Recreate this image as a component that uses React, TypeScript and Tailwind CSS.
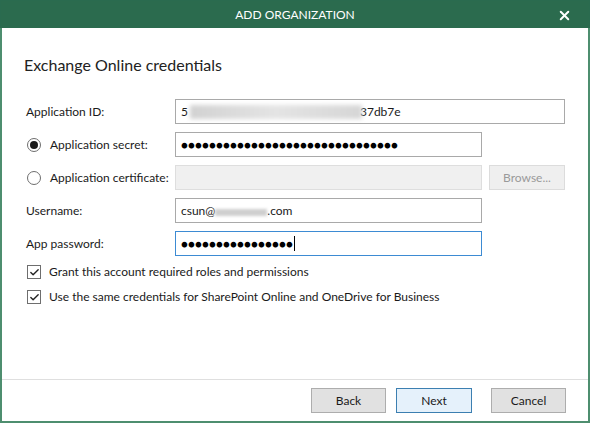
import { Check, X } from 'lucide-react'

const font = { fontFamily: 'Lato, "Noto Sans", sans-serif' }

function Radio({ checked }: { checked?: boolean }) {
  return (
    <span className="flex h-[14px] w-[14px] items-center justify-center rounded-full border border-[#6e6e6e] bg-white">
      {checked && <span className="h-[8px] w-[8px] rounded-full bg-[#1a1a1a]" />}
    </span>
  )
}

function Checkbox() {
  return (
    <span className="flex h-[14px] w-[14px] items-center justify-center border border-[#6e6e6e] bg-white">
      <Check size={11} strokeWidth={3} className="text-[#222]" />
    </span>
  )
}

function Dots({ count }: { count: number }) {
  return <span className="text-[11.5px] tracking-[0.1px] text-black">{'●'.repeat(count)}</span>
}

export default function App() {
  return (
    <div
      className="flex h-[423px] w-[590px] flex-col bg-white text-[12px] text-[#1a1a1a]"
      style={font}
    >
      {/* Title bar */}
      <div className="relative flex h-[28px] shrink-0 items-center justify-center border-x border-t border-[#2a6b4f] bg-[#2b6b4e] text-white">
        <span className="text-[12px]">ADD ORGANIZATION</span>
        <X size={15} strokeWidth={3.2} className="absolute right-[17px] top-[7px] text-white" />
      </div>

      <div className="flex flex-1 flex-col border-x-2 border-b-2 border-[#4e8e6f]">
        <div className="flex-1 pl-[22px] pr-[22px]">
          <h1 className="mt-[25px] text-[16px] text-[#222]">Exchange Online credentials</h1>

          <div className="mt-[22px] flex flex-col gap-[8px]">
            {/* Application ID */}
            <div className="flex h-[25px] items-center">
              <span className="w-[151px] pl-[2px]">Application ID:</span>
              <div className="flex h-full w-[390px] items-center border border-[#a9a9a9] px-[5px]">
                <span>5</span>
                <span className="ml-[2px] h-[14px] w-[172px] bg-gradient-to-r from-[#d2d2d2] via-[#e4e4e4] to-[#d6d6d6] blur-[2px]" />
                <span className="-ml-[2px]">37db7e</span>
              </div>
            </div>

            {/* Application secret */}
            <div className="flex h-[25px] items-center">
              <div className="flex w-[151px] items-center gap-[9px] pl-[3px]">
                <Radio checked />
                <span>Application secret:</span>
              </div>
              <div className="flex h-full w-[307px] items-center border border-[#a9a9a9] px-[5px]">
                <Dots count={31} />
              </div>
            </div>

            {/* Application certificate */}
            <div className="flex h-[25px] items-center">
              <div className="flex w-[151px] items-center gap-[9px] pl-[3px]">
                <Radio />
                <span className="whitespace-nowrap">Application certificate:</span>
              </div>
              <div className="h-full w-[307px] border border-[#dedede] bg-[#f0f0f0]" />
              <button className="ml-[7px] flex h-full w-[76px] items-center justify-center border border-[#dcdcdc] bg-[#efefef] text-[#9a9a9a]">
                Browse...
              </button>
            </div>

            {/* Username */}
            <div className="flex h-[25px] items-center">
              <span className="w-[151px] pl-[2px]">Username:</span>
              <div className="flex h-full w-[307px] items-center border border-[#a9a9a9] px-[5px]">
                <span>csun@</span>
                <span className="h-[7px] w-[52px] translate-y-[2px] bg-[#cfcfcf] blur-[1.5px]" />
                <span>.com</span>
              </div>
            </div>

            {/* App password */}
            <div className="flex h-[25px] items-center">
              <span className="w-[151px] pl-[2px]">App password:</span>
              <div className="flex h-full w-[307px] items-center border border-[#3d8bd3] px-[5px]">
                <Dots count={16} />
                <span className="ml-[1px] h-[15px] w-[1px] bg-black" />
              </div>
            </div>
          </div>

          {/* Checkboxes */}
          <div className="mt-[9px] flex flex-col gap-[11px] pl-[3px]">
            <label className="flex h-[14px] items-center gap-[8px]">
              <Checkbox />
              <span>Grant this account required roles and permissions</span>
            </label>
            <label className="flex h-[14px] items-center gap-[8px]">
              <Checkbox />
              <span>Use the same credentials for SharePoint Online and OneDrive for Business</span>
            </label>
          </div>
        </div>

        {/* Footer */}
        <div className="flex h-[42px] shrink-0 items-start justify-end gap-[10px] border-t border-[#dfdfdf] pr-[22px] pt-[8px]">
          <button className="h-[25px] w-[75px] border border-[#adadad] bg-[#e1e1e1]">Back</button>
          <button className="h-[25px] w-[76px] border border-[#3c7fb1] bg-[#e5f1fb]">Next</button>
          <button className="ml-[9px] h-[25px] w-[75px] border border-[#adadad] bg-[#e1e1e1]">Cancel</button>
        </div>
      </div>
    </div>
  )
}
